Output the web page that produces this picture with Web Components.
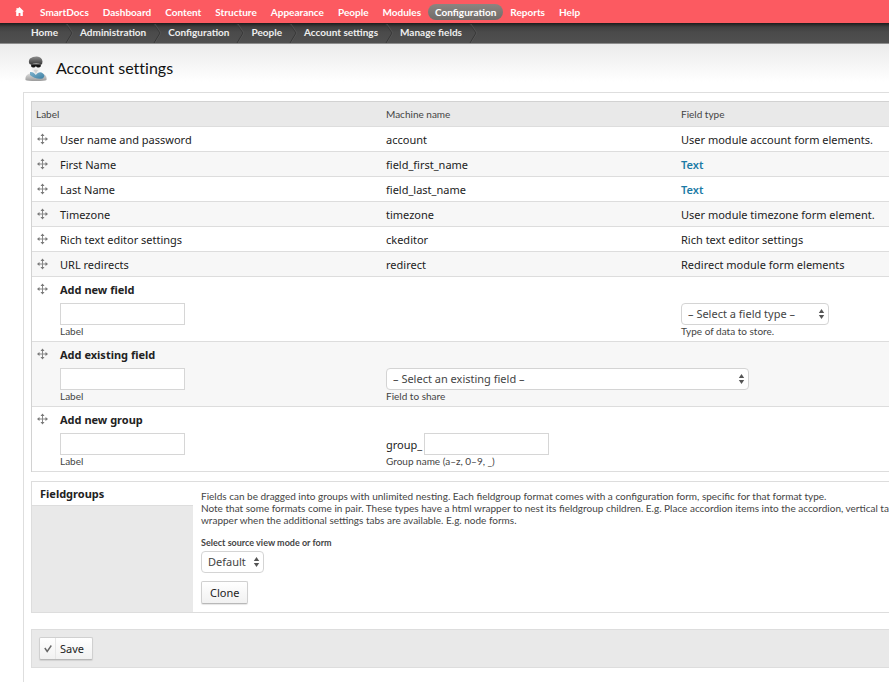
<!DOCTYPE html>
<html lang="en">
<head>
<meta charset="utf-8">
<title>Account settings</title>
<style>
  html, body { margin: 0; }
  body {
    --ui: "Noto Sans", "Open Sans", sans-serif;
    --small: Lato, "Noto Sans", sans-serif;
    --line: #dddddd;
    --grey: #e9e9e9;
    min-height: 100vh;
    display: flex;
    flex-direction: column;
    overflow: hidden;
    background: #fff;
    color: #222;
    font: 11px/15px var(--ui);
  }
</style>
</head>
<body>
<admin-toolbar></admin-toolbar>
<bread-crumb></bread-crumb>
<page-title>Account settings</page-title>
<content-panel>
  <field-table></field-table>
  <group-settings></group-settings>
  <form-actions></form-actions>
</content-panel>

<script>
const define = (name, html) => {
  const template = document.createElement('template');
  template.innerHTML = html;
  customElements.define(name, class extends HTMLElement {
    constructor() {
      super();
      this.attachShadow({ mode: 'open' }).append(template.content.cloneNode(true));
    }
  });
};

const links = (names, active) => names.map(n =>
  `<a href="#"${n === active ? ' class="active"' : ''}>${n}</a>`).join('');

define('admin-toolbar', `
<style>
  :host { display: block; background: #fc5a61; }
  nav { display: flex; align-items: center; height: 23px; padding: 0 7px; }
  a { color: #fff; text-decoration: none; font: bold 10px/16px var(--small); padding: 0 7px; white-space: nowrap; }
  .home { display: flex; padding: 0 9px 0 8px; }
  .active { border-radius: 8px; background: linear-gradient(#8c8480, #706c69); }
</style>
<nav aria-label="Toolbar">
  <a class="home" href="#" aria-label="Home page"><svg width="9" height="9" viewBox="0 0 9 9"><path d="M4.5 0 9 4.6H7.8V9H5.4V6H3.6v3H1.2V4.6H0L1.5 3V1h1.2v.8z" fill="#fff"/></svg></a>
  ${links(['SmartDocs', 'Dashboard', 'Content', 'Structure', 'Appearance', 'People', 'Modules', 'Configuration', 'Reports', 'Help'], 'Configuration')}
</nav>`);

define('bread-crumb', `
<style>
  :host { display: block; background: linear-gradient(#1c1c1c, #3f3f3f 4px, #4a4a4a 9px, #505050); border-bottom: 1px solid #8d8d8d; }
  nav { display: flex; height: 20px; padding-left: 31px; }
  a { color: #eee; text-decoration: none; font: bold 10px/18px var(--small); white-space: nowrap; }
  svg { margin: 0 6px; flex: none; }
</style>
<nav aria-label="Breadcrumb">
  ${['Home', 'Administration', 'Configuration', 'People', 'Account settings', 'Manage fields'].map(n =>
    `<a href="#">${n}</a><svg width="10" height="20" viewBox="0 0 10 20" fill="none"><path d="M2 1 8 10 2 20" stroke="#383838"/><path d="M3 1 9 10 3 20" stroke="#5a5a5a" stroke-opacity=".6"/></svg>`).join('')}
</nav>`);

define('page-title', `
<style>
  :host { display: flex; align-items: center; gap: 9px; height: 48px; padding-left: 25px; background: linear-gradient(#ebebeb, #fff 38px); }
  h1 { margin: 0; font: 16px/24px var(--small); font-variant-ligatures: none; color: #111; }
</style>
<svg width="22" height="25" viewBox="0 0 22 25" aria-hidden="true">
  <defs>
    <linearGradient id="b" x2="0" y2="1"><stop stop-color="#e2e2e2"/><stop offset="1" stop-color="#9b9b9b"/></linearGradient>
    <linearGradient id="s" x2="1" y2="1"><stop stop-color="#7fb3cd"/><stop offset="1" stop-color="#3c7fa3"/></linearGradient>
    <linearGradient id="c" x2="0" y2="1"><stop stop-color="#8d8d8d"/><stop offset="1" stop-color="#3b3b3b"/></linearGradient>
  </defs>
  <path d="M.5 24C0 20 2 17.500 7 17h8c5 .5 7 3 6.500 7Q20 25 11 25T.5 24z" fill="url(#b)"/>
  <path d="M5 16Q8 15.500 11 18 15 15 18 17.500 21 20 17.500 22.500 10 23.500 5 19z" fill="url(#s)"/>
  <path d="M6.500 7h8.500q.5 6-1.500 9l-2.700 3L8 16Q6 13 6.500 7z" fill="#f0f0f0"/>
  <path d="M8.500 14q2.300-1 4.500 0L11 18z" fill="#d2d2d2"/>
  <path d="M6 8.200h10l-.4 2.600q-1.800 1.500-4 .1l-.7-1-.7 1q-2.400 1.300-3.900-.1z" fill="#161616"/>
  <path d="M4.500 8Q3 5 5 2.500 8 .3 12 .5q5 .5 5.500 5l-.5 3Q11 6.500 5.500 8.500z" fill="url(#c)"/>
</svg>
<h1><slot></slot></h1>`);

define('content-panel', `
<style>
  :host { display: flex; flex: 1; flex-direction: column; margin-left: 23px; padding: 8px 0 0 7px; border: 1px solid #dedede; border-width: 1px 0 0 1px; background: #fff; }
</style>
<slot></slot>`);

define('drag-handle', `
<style>
  :host { display: block; }
  a { display: block; height: 15px; }
  svg { display: block; }
</style>
<a href="#" aria-label="Drag to re-order"><svg width="11" height="13" viewBox="0 0 11 13"><path d="M5.500 3v8M1.500 7h8" stroke="#888"/><path d="M5.500 1.500 7.500 4h-4zM5.500 12.500 7.500 10h-4zM0 7l2.500-2v4zM11 7 8.500 5v4z" fill="#777"/></svg></a>`);

customElements.define('text-field', class extends HTMLElement {
  constructor() {
    super();
    const prefix = this.getAttribute('prefix') || '';
    this.attachShadow({ mode: 'open' }).innerHTML = `
<style>
  :host { display: block; }
  div { display: flex; align-items: center; gap: 2px; }
  input { box-sizing: border-box; width: 125px; height: 22px; margin: 0; padding: 2px 4px; border: 1px solid #d6d6d6; border-radius: 0; background: #fff; font: 11px/15px var(--ui); color: #333; }
  label { display: block; font: 10px/13px var(--small); color: #444; }
</style>
<div>${prefix ? `<span>${prefix}</span>` : ''}<input id="i" type="text"></div>
<label for="i"><slot></slot></label>`;
  }
});

customElements.define('select-field', class extends HTMLElement {
  constructor() {
    super();
    const above = this.hasAttribute('label-above');
    const label = '<label for="s"><slot></slot></label>';
    this.attachShadow({ mode: 'open' }).innerHTML = `
<style>
  :host { display: block; }
  div { display: grid; width: var(--select-width); align-items: center; }
  select, svg { grid-area: 1 / 1; }
  select { appearance: none; box-sizing: border-box; width: 100%; height: 22px; margin: 0; padding: 0 16px 0 6px; border: 1px solid #d4d4d4; border-radius: 4px; background: #fff; font: 11px/18px var(--ui); color: #444; }
  svg { justify-self: end; margin-right: 4px; pointer-events: none; }
  label { display: block; font: 10px/13px var(--small); color: #444; }
  :host([label-above]) label { font-weight: bold; font-size: 9px; margin-bottom: 2px; }
</style>
${above ? label : ''}
<div><select id="s"><option>${this.getAttribute('value')}</option></select>
<svg width="7" height="10" viewBox="0 0 7 10"><path d="M3.500 0 6.200 4H.8zM3.500 10 6.200 6H.8z" fill="#555"/></svg></div>
${above ? '' : label}`;
  }
});

const rows = [
  ['User name and password', 'account', 'User module account form elements.'],
  ['First Name', 'field_first_name', '<a href="#">Text</a>'],
  ['Last Name', 'field_last_name', '<a href="#">Text</a>'],
  ['Timezone', 'timezone', 'User module timezone form element.'],
  ['Rich text editor settings', 'ckeditor', 'Rich text editor settings'],
  ['URL redirects', 'redirect', 'Redirect module form elements'],
  ['<b>Add new field</b><text-field>Label</text-field>', '', '<select-field class="type" value="– Select a field type –">Type of data to store.</select-field>'],
  ['<b>Add existing field</b><text-field>Label</text-field>', '<select-field class="existing" value="– Select an existing field –">Field to share</select-field>', null],
  ['<b>Add new group</b><text-field>Label</text-field>', '<text-field prefix="group_">Group name (a–z, 0–9, _)</text-field>', '']
];

define('field-table', `
<style>
  :host { display: block; }
  table { width: 100%; table-layout: fixed; border-collapse: separate; border-spacing: 0; border: 1px solid #d2d2d2; border-width: 1px 0 0 1px; }
  .c1 { width: 24px; } .c2 { width: 325px; } .c3 { width: 295px; }
  th { padding: 6px 5px; text-align: left; font: 10px/12px var(--small); color: #444; background: var(--grey); border-bottom: 1px solid var(--line); }
  th:first-child { padding-left: 4px; }
  td { padding: 5px 5px 4px; vertical-align: bottom; border-bottom: 1px solid var(--line); white-space: nowrap; }
  td:first-child { vertical-align: top; padding-right: 0; }
  td:nth-child(2) { padding-left: 4px; }
  .form td { padding-bottom: 3px; }
  tr:nth-child(even) td { background: #f7f7f7; }
  b { display: block; margin-bottom: 6px; }
  td a { color: #1c7ba6; text-decoration: none; font-weight: 600; }
  .type { --select-width: 148px; }
  .existing { --select-width: 363px; }
</style>
<table>
  <colgroup><col class="c1"><col class="c2"><col class="c3"><col></colgroup>
  <thead><tr><th colspan="2" scope="col">Label</th><th scope="col">Machine name</th><th scope="col">Field type</th></tr></thead>
  <tbody>${rows.map(([a, b, c]) =>
    `<tr${a.startsWith('<b>') ? ' class="form"' : ''}><td><drag-handle></drag-handle></td><td>${a}</td><td${c === null ? ' colspan="2"' : ''}>${b}</td>${c === null ? '' : `<td>${c}</td>`}</tr>`).join('')}</tbody>
</table>`);

define('push-button', `
<style>
  :host { display: block; }
  button { display: flex; align-items: stretch; box-sizing: border-box; height: 23px; margin: 0; padding: 0; border: 1px solid #d0d0d0; border-bottom-color: #b8b8b8; border-radius: 2px; background: linear-gradient(#fff, #f1f1f1); box-shadow: 0 1px 1px #0000001a; font: 11px/21px var(--ui); color: #222; }
  span { padding: 0 8px; }
  svg { display: none; padding: 0 3px 0 4px; border-right: 1px solid #e6e6e6; align-self: stretch; }
  :host([check]) svg { display: block; }
  :host([check]) span { padding: 0 8px 0 4px; }
</style>
<button type="button"><svg width="8" height="21" viewBox="0 0 8 21" fill="none"><path d="M.8 10 3.200 13.500 7.300 7.500" stroke="#666" stroke-width="1.400"/></svg><span><slot></slot></span></button>`);

define('group-settings', `
<style>
  :host { display: flex; margin-top: 9px; border: 1px solid var(--line); border-right: 0; }
  .tabs { flex: none; box-sizing: border-box; width: 161px; background: var(--grey); }
  .tabs button { display: block; width: 100%; height: 24px; margin: 0; padding: 0 8px; border: 0; border-bottom: 1px solid var(--line); background: #fff; text-align: left; font: bold 11px/23px var(--ui); color: #222; }
  .pane { flex: 1; min-width: 0; padding: 8px 0 8px 8px; }
  p { margin: 0 0 10px; font: 10px/12px var(--small); color: #444; white-space: nowrap; }
  select-field { --select-width: 63px; margin-bottom: 8px; }
</style>
<div class="tabs"><button type="button">Fieldgroups</button></div>
<div class="pane">
  <p>Fields can be dragged into groups with unlimited nesting. Each fieldgroup format comes with a configuration form, specific for that format type.<br>Note that some formats come in pair. These types have a html wrapper to nest its fieldgroup children. E.g. Place accordion items into the accordion, vertical tab<br>wrapper when the additional settings tabs are available. E.g. node forms.</p>
  <select-field label-above value="Default">Select source view mode or form</select-field>
  <push-button>Clone</push-button>
</div>`);

define('form-actions', `
<style>
  :host { display: block; margin-top: 16px; padding: 7px; border: 1px solid var(--line); border-right: 0; background: var(--grey); }
</style>
<push-button check>Save</push-button>`);
</script>
</body>
</html>
